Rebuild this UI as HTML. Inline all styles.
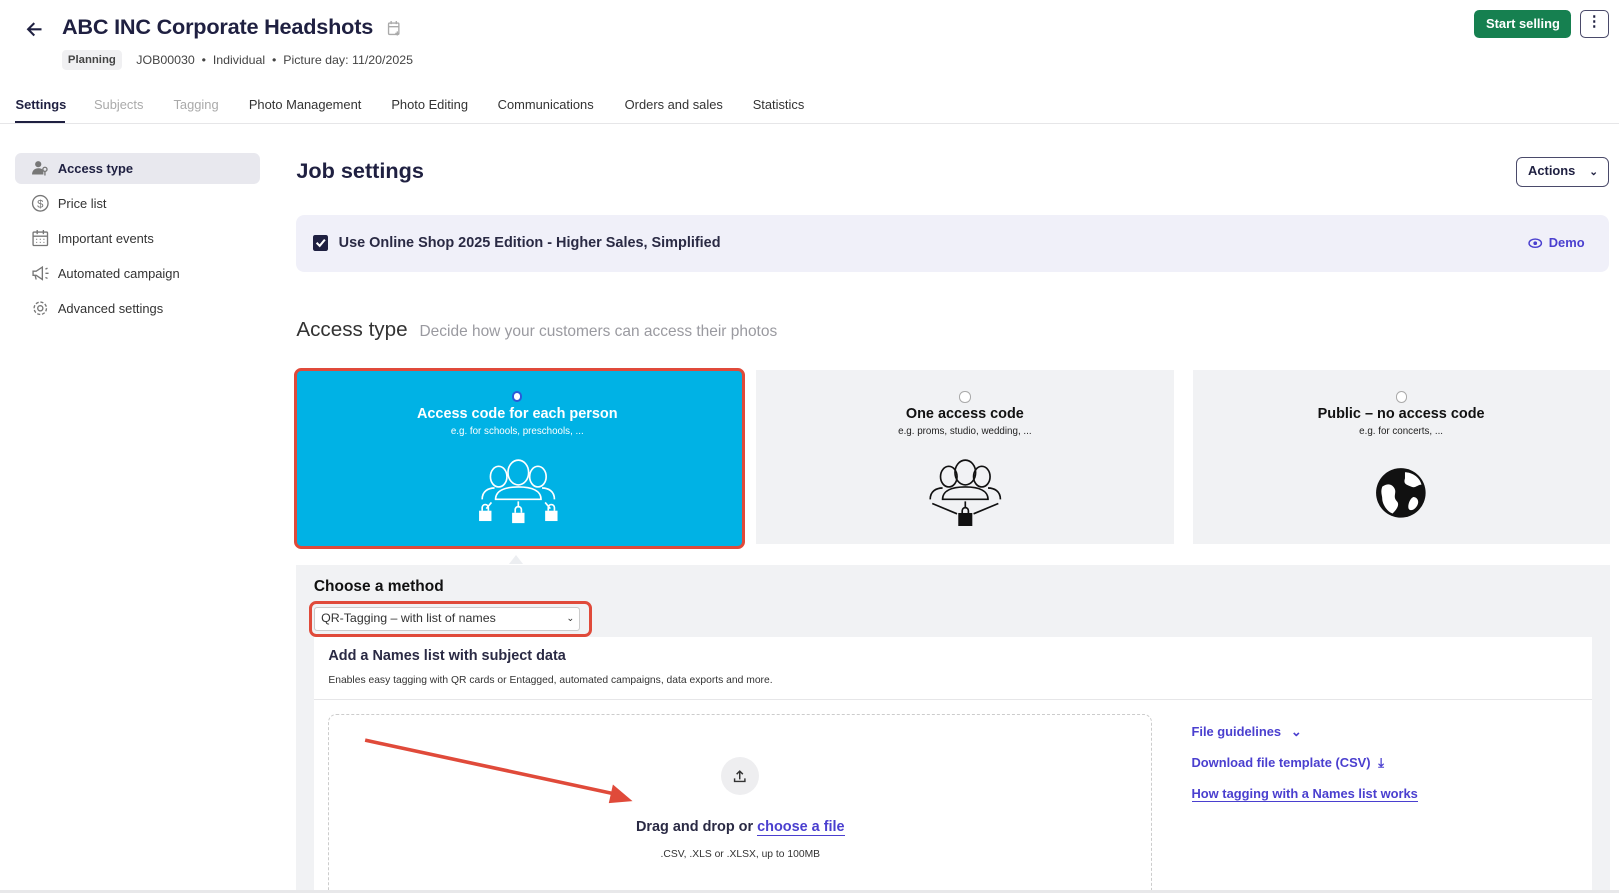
<!DOCTYPE html>
<html><head><meta charset="utf-8">
<style>
html{zoom:1.0325}
*{box-sizing:border-box;margin:0;padding:0}
body{width:1568px;height:865px;overflow:hidden;background:#fff;font-family:"Liberation Sans",sans-serif;color:#1f2041;position:relative}
.a{position:absolute;white-space:nowrap}
.tab{position:absolute;top:94px;font-size:12.5px;color:#333}
.side{position:absolute;left:56px;font-size:12.5px;color:#333}
.sico{position:absolute;left:30px;width:18px;height:18px}
.link{position:absolute;left:1154px;font-size:12.5px;font-weight:bold;color:#4a3fcf}
</style></head><body>
<svg class="a" style="left:24px;top:19px" width="18" height="18" viewBox="0 0 18 18"><path d="M16 9H3M9 3L3 9l6 6" fill="none" stroke="#1f2041" stroke-width="2"/></svg>
<div class="a" style="left:60px;top:14px;font-size:21px;font-weight:bold;letter-spacing:-0.2px">ABC INC Corporate Headshots</div>
<svg class="a" style="left:375px;top:19px" width="14" height="16" viewBox="0 0 14 16"><rect x="1.5" y="3" width="10" height="11" rx="1" fill="none" stroke="#aaa" stroke-width="1.3"/><path d="M4 1v3M9 1v3M1.5 6.5h10M10 11v4M8 13h4" stroke="#aaa" stroke-width="1.3"/></svg>
<div class="a" style="left:60px;top:48px;width:58px;height:20px;background:#f0f0f2;border-radius:4px;font-size:11px;font-weight:bold;color:#444;text-align:center;line-height:20px">Planning</div>
<div class="a" style="left:132px;top:51px;font-size:12px;color:#444">JOB00030 &nbsp;•&nbsp; Individual &nbsp;•&nbsp; Picture day: 11/20/2025</div>
<div class="a" style="left:1428px;top:10px;width:94px;height:27px;background:#168050;border-radius:5px;color:#fff;font-size:12.5px;font-weight:bold;text-align:center;line-height:27px">Start selling</div>
<div class="a" style="left:1530px;top:10px;width:28px;height:27px;border:1.5px solid #4a4a6a;border-radius:5px;text-align:center;line-height:22px;font-weight:bold;font-size:14px">⋮</div>
<div class="tab" style="left:15px;color:#1f2041;font-weight:bold">Settings</div>
<div class="a" style="left:15px;top:117px;width:48px;height:2px;background:#1f2041"></div>
<div class="tab" style="left:91px;color:#aaa">Subjects</div>
<div class="tab" style="left:168px;color:#aaa">Tagging</div>
<div class="tab" style="left:241px">Photo Management</div>
<div class="tab" style="left:379px">Photo Editing</div>
<div class="tab" style="left:482px">Communications</div>
<div class="tab" style="left:605px">Orders and sales</div>
<div class="tab" style="left:729px">Statistics</div>
<div class="a" style="left:0;top:119px;width:1568px;height:1px;background:#e6e6e8"></div>
<div class="a" style="left:15px;top:148px;width:237px;height:30px;background:#e8e8ee;border-radius:6px"></div>
<svg class="sico" style="top:154px" viewBox="0 0 18 18"><circle cx="7" cy="5" r="3" fill="#777"/><path d="M1 15c0-4 3-6 6-6s4 1 5 2v4z" fill="#777"/><circle cx="13.5" cy="10" r="2" fill="none" stroke="#777" stroke-width="1.3"/><path d="M13.5 12v4" stroke="#777" stroke-width="1.3"/></svg>
<div class="side" style="top:156px;font-weight:bold;color:#1f2041">Access type</div>
<svg class="sico" style="top:188px" viewBox="0 0 18 18"><circle cx="9" cy="9" r="7.5" fill="none" stroke="#777" stroke-width="1.3"/><text x="9" y="13" font-size="11" text-anchor="middle" fill="#777" font-family="Liberation Sans">$</text></svg>
<div class="side" style="top:190px">Price list</div>
<svg class="sico" style="top:222px" viewBox="0 0 18 18"><rect x="2" y="3" width="14" height="13" rx="1" fill="none" stroke="#777" stroke-width="1.3"/><path d="M2 7h14M6 1v4M12 1v4" stroke="#777" stroke-width="1.3"/><path d="M5 10h1M8.5 10h1M12 10h1M5 13h1M8.5 13h1M12 13h1" stroke="#777"/></svg>
<div class="side" style="top:224px">Important events</div>
<svg class="sico" style="top:256px" viewBox="0 0 18 18"><path d="M2 7h3l6-4v12l-6-4H2z" fill="none" stroke="#777" stroke-width="1.3"/><path d="M4 11l1 4M14 5l2-1M14 9h3M14 13l2 1" stroke="#777" stroke-width="1.3"/></svg>
<div class="side" style="top:258px">Automated campaign</div>
<svg class="sico" style="top:290px" viewBox="0 0 18 18"><circle cx="9" cy="9" r="2.5" fill="none" stroke="#777" stroke-width="1.3"/><circle cx="9" cy="9" r="6" fill="none" stroke="#777" stroke-width="1.3" stroke-dasharray="3 1.7"/></svg>
<div class="side" style="top:292px">Advanced settings</div>
<div class="a" style="left:287px;top:153px;font-size:21px;font-weight:bold">Job settings</div>
<div class="a" style="left:1468px;top:152px;width:90px;height:29px;border:1.5px solid #4a4a6a;border-radius:6px;font-size:12.5px;font-weight:bold;line-height:26px;padding-left:11px">Actions <span style="margin-left:10px;font-size:10px">⌄</span></div>
<div class="a" style="left:287px;top:208px;width:1271px;height:55px;background:#f0f0f9;border-radius:8px"></div>
<div class="a" style="left:303px;top:228px;width:15px;height:15px;background:#1f2041;border-radius:2px"></div>
<svg class="a" style="left:303px;top:228px" width="15" height="15" viewBox="0 0 15 15"><path d="M3.5 7.5l3 3 5-6" fill="none" stroke="#fff" stroke-width="2"/></svg>
<div class="a" style="left:328px;top:228px;font-size:14px;font-weight:bold;color:#2a2a44">Use Online Shop 2025 Edition - Higher Sales, Simplified</div>
<svg class="a" style="left:1480px;top:230px" width="14" height="12" viewBox="0 0 14 12"><ellipse cx="7" cy="6" rx="6" ry="4" fill="none" stroke="#4a3fcf" stroke-width="1.4"/><circle cx="7" cy="6" r="1.8" fill="#4a3fcf"/></svg>
<div class="a" style="left:1500px;top:228px;font-size:12.5px;font-weight:bold;color:#4a3fcf">Demo</div>
<div class="a" style="left:287px;top:308px;font-size:20px;color:#333">Access type <span style="font-size:15px;color:#9a9aa0;margin-left:6px">Decide how your customers can access their photos</span></div>
<div class="a" style="left:285px;top:356px;width:437px;height:176px;border:3px solid #e04a3a;border-radius:7px;background:#00b2e5"></div>
<div class="a" style="left:732px;top:358px;width:405px;height:169px;background:#f1f2f4"></div>
<div class="a" style="left:1155px;top:358px;width:404px;height:169px;background:#f1f2f4"></div>
<div class="a" style="left:496px;top:379px;width:10px;height:10px;border-radius:50%;background:#fff;border:2px solid #2b5bd7"></div>
<div class="a" style="left:929px;top:379px;width:11px;height:11px;border-radius:50%;background:#fff;border:1px solid #aaa"></div>
<div class="a" style="left:1352px;top:379px;width:11px;height:11px;border-radius:50%;background:#fff;border:1px solid #aaa"></div>
<div class="a" style="left:287px;width:428px;top:393px;text-align:center;font-size:14px;font-weight:bold;color:#fff">Access code for each person</div>
<div class="a" style="left:287px;width:428px;top:413px;text-align:center;font-size:9.5px;color:#fff">e.g. for schools, preschools, ...</div>
<div class="a" style="left:732px;width:405px;top:393px;text-align:center;font-size:14px;font-weight:bold;color:#111">One access code</div>
<div class="a" style="left:732px;width:405px;top:413px;text-align:center;font-size:9.5px;color:#222">e.g. proms, studio, wedding, ...</div>
<div class="a" style="left:1155px;width:404px;top:393px;text-align:center;font-size:14px;font-weight:bold;color:#111">Public – no access code</div>
<div class="a" style="left:1155px;width:404px;top:413px;text-align:center;font-size:9.5px;color:#222">e.g. for concerts, ...</div>
<svg class="a" style="left:462px;top:442px" width="80" height="70" viewBox="0 0 80 70" fill="none" stroke="#fff" stroke-width="1.6">
<ellipse cx="21" cy="20" rx="8" ry="10"/><ellipse cx="59" cy="20" rx="8" ry="10"/><ellipse cx="40" cy="16" rx="10" ry="12"/>
<path d="M5 42c0-8 6-11 12-11M75 42c0-8-6-11-12-11M18 42c0-8 8-12 22-12s22 4 22 12z"/>
<path d="M14 45l-5 6M40 44v6M66 45l5 6"/>
<g fill="#fff" stroke="none"><rect x="2" y="53" width="12" height="10"/><rect x="34" y="55" width="12" height="10"/><rect x="66" y="53" width="12" height="10"/></g>
<path d="M5 53v-3a3 3 0 016 0v3M37 55v-3a3 3 0 016 0v3M69 53v-3a3 3 0 016 0v3"/></svg>
<svg class="a" style="left:895px;top:442px" width="80" height="70" viewBox="0 0 80 70" fill="none" stroke="#111" stroke-width="1.6">
<ellipse cx="24" cy="20" rx="8" ry="10"/><ellipse cx="56" cy="20" rx="8" ry="10"/><ellipse cx="40" cy="16" rx="10" ry="12"/>
<path d="M6 42c0-8 6-11 12-11M74 42c0-8-6-11-12-11M18 42c0-8 8-12 22-12s22 4 22 12z"/>
<path d="M8 46l24 10M72 46l-24 10M40 44v6"/>
<rect x="34" y="56" width="12" height="11" fill="#111"/><path d="M37 56v-3a3 3 0 016 0v3"/></svg>
<svg class="a" style="left:1331px;top:451px" width="52" height="52" viewBox="0 0 52 52"><circle cx="26" cy="26" r="24" fill="#111"/><path d="M8 20c6-4 10-2 12 2s-2 8 2 12-2 10-4 12c-6-2-10-10-10-14s-2-6 0-12zM30 6c6 0 14 4 16 12-4 0-6 4-10 2s-8-2-6-8zM38 30c4 0 6 4 4 8s-6 6-8 4 0-10 4-12z" fill="#fff"/></svg>
<div class="a" style="left:493px;top:538px;width:0;height:0;border-left:7px solid transparent;border-right:7px solid transparent;border-bottom:9px solid #eceef1"></div>
<div class="a" style="left:287px;top:547px;width:1272px;height:315px;background:#f1f2f4"></div>
<div class="a" style="left:304px;top:560px;font-size:15px;font-weight:bold;color:#111">Choose a method</div>
<div class="a" style="left:299px;top:582px;width:274px;height:35px;border:3px solid #e04a3a;border-radius:7px"></div>
<div class="a" style="left:304px;top:588px;width:258px;height:23px;background:#fff;border:1px solid #ccc;border-radius:3px;font-size:12px;color:#333;line-height:21px;padding-left:6px">QR-Tagging – with list of names<span style="position:absolute;right:5px;font-size:9px">⌄</span></div>
<div class="a" style="left:304px;top:617px;width:1238px;height:245px;background:#fff"></div>
<div class="a" style="left:318px;top:628px;font-size:14px;font-weight:bold;color:#2a2a44">Add a Names list with subject data</div>
<div class="a" style="left:318px;top:654px;font-size:10px;color:#333">Enables easy tagging with QR cards or Entagged, automated campaigns, data exports and more.</div>
<div class="a" style="left:304px;top:677px;width:1238px;height:1px;background:#e6e6e8"></div>
<div class="a" style="left:318px;top:692px;width:798px;height:170px;border:1px dashed #ccc;border-bottom:none;border-radius:8px 8px 0 0"></div>
<div class="a" style="left:698px;top:733px;width:37px;height:37px;border-radius:50%;background:#eeeef0"></div>
<svg class="a" style="left:709px;top:744px" width="15" height="15" viewBox="0 0 15 15"><path d="M7.5 11V3M4.5 6l3-3 3 3M2.5 10v3h10v-3" fill="none" stroke="#333" stroke-width="1.4"/></svg>
<div class="a" style="left:318px;width:798px;top:793px;text-align:center;font-size:14px;font-weight:bold;color:#2a2a44">Drag and drop or <span style="color:#4a3fcf;border-bottom:1.5px solid #4a3fcf">choose a file</span></div>
<div class="a" style="left:318px;width:798px;top:822px;text-align:center;font-size:10px;color:#333">.CSV, .XLS or .XLSX, up to 100MB</div>
<svg class="a" style="left:350px;top:712px" width="270" height="70" viewBox="0 0 270 70"><path d="M4 5L250 58" stroke="#e04a3a" stroke-width="3.5"/><path d="M244 48L263 64 240 66z" fill="#e04a3a"/></svg>
<div class="link" style="top:701px">File guidelines <span style="margin-left:6px">⌄</span></div>
<div class="link" style="top:731px">Download file template (CSV) <span style="margin-left:4px">⤓</span></div>
<div class="link" style="top:761px;border-bottom:1.5px solid #4a3fcf">How tagging with a Names list works</div>
<div class="a" style="left:0;top:862px;width:1568px;height:3px;background:#e8e8ea"></div>
</body></html>
